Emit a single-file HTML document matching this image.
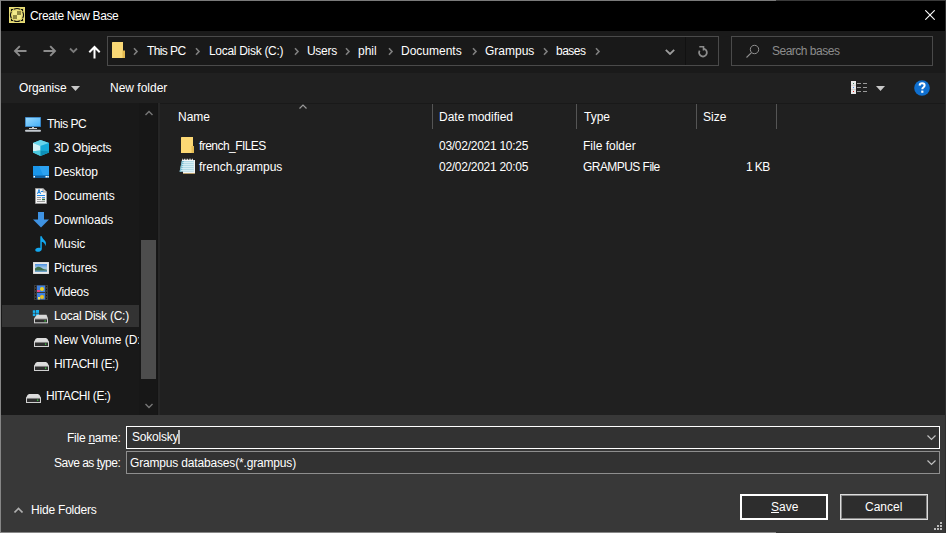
<!DOCTYPE html>
<html><head><meta charset="utf-8">
<style>
*{margin:0;padding:0;box-sizing:border-box}
html,body{width:946px;height:533px;overflow:hidden;background:#191919}
body{position:relative;font-family:"Liberation Sans",sans-serif;font-size:12px;color:#fff}
.a{position:absolute}
.t{position:absolute;white-space:nowrap;line-height:14px}
#title{left:0;top:0;width:946px;height:31px;background:#000}
#nav{left:0;top:31px;width:946px;height:42px;background:#1a1a1a}
#cmd{left:0;top:73px;width:946px;height:30px;background:#202020}
#side{left:0;top:103px;width:159px;height:312px;background:#191919}
#content{left:159px;top:104px;width:787px;height:311px;background:#202020}
#bottom{left:0;top:415px;width:946px;height:118px;background:#383838}
.box{position:absolute;border:1px solid #555}
.chev{color:#9a9a9a}
.side .t{}
</style></head><body>
<div class="a" id="title"></div>
<div class="a" id="nav"></div>
<div class="a" id="cmd"></div>
<div class="a" id="side"></div>
<div class="a" id="content"></div>
<div class="a" id="bottom"></div>

<!-- borders -->
<div class="a" style="left:0;top:0;width:776px;height:1px;background:#7a7a7a"></div>
<div class="a" style="left:776px;top:0;width:170px;height:1px;background:#3a3a3a"></div>
<div class="a" style="left:0;top:0;width:1px;height:533px;background:#868686"></div>
<div class="a" style="left:0;top:532px;width:776px;height:1px;background:#888"></div>
<div class="a" style="left:776px;top:532px;width:170px;height:1px;background:#353535"></div>
<div class="a" style="left:945px;top:1px;width:1px;height:531px;background:#2e2e2e"></div>

<!-- title -->
<svg class="a" style="left:9px;top:7px" width="16" height="16" viewBox="0 0 16 16">
<rect x="0" y="0" width="16" height="16" fill="#e6dc78"/>
<rect x="1" y="1" width="14" height="14" fill="#d6cc68"/>
<circle cx="8" cy="8" r="5.6" fill="#e8de7a"/>
<rect x="4" y="4" width="4" height="4" fill="#f2ea8a"/><rect x="8" y="8" width="4" height="4" fill="#f2ea8a"/>
<rect x="8" y="4" width="4" height="4" fill="#8f8842"/><rect x="4" y="8" width="4" height="4" fill="#8f8842"/>
<path d="M5 2.3A6 6 0 0 1 11 2.3M13.7 5A6 6 0 0 1 13.7 11M11 13.7A6 6 0 0 1 5 13.7M2.3 11A6 6 0 0 1 2.3 5" stroke="#111" stroke-width="1.1" fill="none"/>
<path d="M2 2h2.2v1H3v1.2H2zM14 2h-2.2v1H13v1.2h1zM2 14h2.2v-1H3v-1.2H2zM14 14h-2.2v-1H13v-1.2h1z" fill="#111"/>
</svg>
<div class="t" style="left:30px;top:9px;font-size:12px;letter-spacing:-0.38px">Create New Base</div>
<svg class="a" style="left:925px;top:10px" width="10" height="10" viewBox="0 0 10 10"><path d="M0.3 0.3L9.7 9.7M9.7 0.3L0.3 9.7" stroke="#fff" stroke-width="1.1"/></svg>

<!-- nav -->
<svg class="a" style="left:13px;top:45px" width="14" height="12" viewBox="0 0 14 12"><path d="M13.5 6H2M6.8 1.2L2 6L6.8 10.8" stroke="#8c8c8c" stroke-width="1.9" fill="none"/></svg>
<svg class="a" style="left:43px;top:45px" width="14" height="12" viewBox="0 0 14 12"><path d="M0.5 6H12M7.2 1.2L12 6L7.2 10.8" stroke="#8c8c8c" stroke-width="1.9" fill="none"/></svg>
<svg class="a" style="left:69px;top:47px" width="9" height="7" viewBox="0 0 9 7"><path d="M1 1.5L4.5 5L8 1.5" stroke="#7a7a7a" stroke-width="1.8" fill="none"/></svg>
<svg class="a" style="left:88px;top:45px" width="13" height="14" viewBox="0 0 13 14"><path d="M6.5 13.5V2.5M1.3 7.2L6.5 2L11.7 7.2" stroke="#fff" stroke-width="2" fill="none"/></svg>

<div class="box" style="left:107px;top:36px;width:612px;height:30px;border-color:#4a4a4a;background:#191919"></div>
<div class="a" style="left:685px;top:37px;width:1px;height:28px;background:#111"></div>
<svg class="a" style="left:112px;top:42px" width="14" height="16" viewBox="0 0 14 16"><path d="M0 0.5Q0 0 0.5 0H11V16H0z" fill="#f8d775"/><path d="M10.5 8.5h2.5v7.5h-2.5z" fill="#e3b94f"/></svg>
<svg class="a" style="left:133px;top:47px" width="6" height="9" viewBox="0 0 6 9"><path d="M1 1.3L4 4.5L1 7.7" stroke="#808080" stroke-width="1.6" fill="none"/></svg>
<div class="t" style="left:147px;top:44px;letter-spacing:-0.6px">This PC</div>
<svg class="a" style="left:195px;top:47px" width="6" height="9" viewBox="0 0 6 9"><path d="M1 1.3L4 4.5L1 7.7" stroke="#808080" stroke-width="1.6" fill="none"/></svg>
<div class="t" style="left:209px;top:44px;letter-spacing:-0.3px">Local Disk (C:)</div>
<svg class="a" style="left:294px;top:47px" width="6" height="9" viewBox="0 0 6 9"><path d="M1 1.3L4 4.5L1 7.7" stroke="#808080" stroke-width="1.6" fill="none"/></svg>
<div class="t" style="left:307px;top:44px;letter-spacing:-0.3px">Users</div>
<svg class="a" style="left:345px;top:47px" width="6" height="9" viewBox="0 0 6 9"><path d="M1 1.3L4 4.5L1 7.7" stroke="#808080" stroke-width="1.6" fill="none"/></svg>
<div class="t" style="left:358px;top:44px">phil</div>
<svg class="a" style="left:388px;top:47px" width="6" height="9" viewBox="0 0 6 9"><path d="M1 1.3L4 4.5L1 7.7" stroke="#808080" stroke-width="1.6" fill="none"/></svg>
<div class="t" style="left:401px;top:44px">Documents</div>
<svg class="a" style="left:472px;top:47px" width="6" height="9" viewBox="0 0 6 9"><path d="M1 1.3L4 4.5L1 7.7" stroke="#808080" stroke-width="1.6" fill="none"/></svg>
<div class="t" style="left:485px;top:44px">Grampus</div>
<svg class="a" style="left:543px;top:47px" width="6" height="9" viewBox="0 0 6 9"><path d="M1 1.3L4 4.5L1 7.7" stroke="#808080" stroke-width="1.6" fill="none"/></svg>
<div class="t" style="left:556px;top:44px;letter-spacing:-0.5px">bases</div>
<svg class="a" style="left:595px;top:47px" width="6" height="9" viewBox="0 0 6 9"><path d="M1 1.3L4 4.5L1 7.7" stroke="#808080" stroke-width="1.6" fill="none"/></svg>
<svg class="a" style="left:665px;top:49px" width="10" height="6" viewBox="0 0 10 6"><path d="M0.8 0.8L5 5L9.2 0.8" stroke="#9c9c9c" stroke-width="1.8" fill="none"/></svg>
<svg class="a" style="left:696px;top:44px" width="14" height="14" viewBox="0 0 14 14"><path d="M7.4 4.7A3.9 3.9 0 1 1 3.6 6.6" stroke="#8c8c8c" stroke-width="1.8" fill="none"/><path d="M3.3 2.7H7.5V6.4" stroke="#8c8c8c" stroke-width="1.6" fill="none"/></svg>

<div class="box" style="left:731px;top:36px;width:202px;height:30px;border-color:#4a4a4a;background:#191919"></div>
<svg class="a" style="left:745px;top:44px" width="15" height="15" viewBox="0 0 15 15"><circle cx="9.5" cy="5.5" r="4.2" stroke="#909090" stroke-width="1" fill="none"/><path d="M6.5 8.6L1.5 13.5" stroke="#909090" stroke-width="1.1"/></svg>
<div class="t" style="left:772px;top:44px;color:#8c8c8c;letter-spacing:-0.5px">Search bases</div>

<!-- command bar -->
<div class="t" style="left:19px;top:81px;letter-spacing:-0.15px">Organise</div>
<svg class="a" style="left:71px;top:86px" width="9" height="5" viewBox="0 0 9 5"><path d="M0 0h9L4.5 5z" fill="#c8c8c8"/></svg>
<div class="t" style="left:110px;top:81px">New folder</div>
<svg class="a" style="left:851px;top:81px" width="17" height="13" viewBox="0 0 17 13"><rect x="0" y="0" width="5" height="13" fill="#e8e8e8"/><path d="M0 4.3h5M0 8.6h5" stroke="#bbb" stroke-width="0.6"/><rect x="2" y="2" width="1" height="1" fill="#3a7a5a"/><rect x="2" y="6" width="1" height="1" fill="#4a90f0"/><rect x="2" y="10" width="1" height="1" fill="#e02020"/><path d="M6 2.5h4M12 2.5h4M6 6.5h4M12 6.5h4M6 10.5h4M12 10.5h4" stroke="#9a9a9a" stroke-width="1.2"/></svg>
<svg class="a" style="left:876px;top:86px" width="9" height="5" viewBox="0 0 9 5"><path d="M0 0h9L4.5 5z" fill="#c8c8c8"/></svg>
<svg class="a" style="left:914px;top:80px" width="16" height="16" viewBox="0 0 16 16"><circle cx="8" cy="8" r="7.8" fill="#0f6fcf"/><path d="M5.6 5.6Q5.8 3.3 8.1 3.3Q10.6 3.3 10.6 5.5Q10.6 6.7 9.3 7.5Q8.3 8.1 8.3 9.3" stroke="#fff" stroke-width="2" fill="none"/><rect x="7.2" y="10.6" width="2.2" height="2.2" fill="#fff"/></svg>

<!-- sidebar -->
<div class="a" style="left:139px;top:103px;width:19px;height:312px;background:#171717"></div>
<div class="a" style="left:157px;top:103px;width:1px;height:312px;background:#151515"></div><div class="a" style="left:158px;top:103px;width:2px;height:312px;background:#262626"></div>
<svg class="a" style="left:145px;top:110px" width="8" height="6" viewBox="0 0 8 6"><path d="M0.5 5L4 1.5L7.5 5" stroke="#777" stroke-width="1.4" fill="none"/></svg>
<div class="a" style="left:141px;top:240px;width:15px;height:139px;background:#4d4d4d"></div>
<svg class="a" style="left:145px;top:403px" width="8" height="6" viewBox="0 0 8 6"><path d="M0.5 1L4 4.5L7.5 1" stroke="#777" stroke-width="1.4" fill="none"/></svg>
<div class="a" style="left:2px;top:305px;width:137px;height:22px;background:#333"></div>


<!-- sidebar icons -->
<svg class="a" style="left:25px;top:116px" width="16" height="16" viewBox="0 0 16 16">
<defs><linearGradient id="scr" x1="0" y1="0" x2="1" y2="1"><stop offset="0" stop-color="#9adaff"/><stop offset="1" stop-color="#45b0f8"/></linearGradient></defs>
<rect x="0" y="1" width="16" height="10" fill="#2a70b0"/><rect x="0.7" y="1.7" width="14.6" height="8.6" fill="url(#scr)"/>
<rect x="7" y="11" width="2" height="2" fill="#c8c8c8"/><rect x="4" y="12" width="8" height="1" fill="#d0d0d0"/>
<rect x="0" y="13.8" width="16" height="2" rx="1" fill="#c4cad0"/></svg>

<svg class="a" style="left:33px;top:140px" width="16" height="16" viewBox="0 0 16 16">
<path d="M7.5 0L16 3V12.5L7.5 16L0 12.5V3Z" fill="#3cc4dc"/>
<path d="M7.5 0L16 3L7.5 6.1L0 3Z" fill="#66d4ea"/>
<path d="M0 3L7.5 6.1V10.6L0 11.2Z" fill="#d4f2f6"/>
<path d="M0 11.2L7.5 10.6V16L0 12.5Z" fill="#4cc8de"/>
<path d="M7.5 6.1L16 3V11.2L7.5 10.6Z" fill="#14aad8"/>
<path d="M7.5 10.6L16 11.2V12.5L7.5 16Z" fill="#0d8fb8"/></svg>

<svg class="a" style="left:33px;top:166px" width="16" height="12" viewBox="0 0 16 12">
<rect x="0" y="0" width="16" height="12" fill="#1a96ea"/><path d="M6 0H16V9L10 9Z" fill="#3aaaf5" opacity="0.6"/>
<rect x="0" y="9.5" width="16" height="2.5" fill="#0f5fa0"/><rect x="0.5" y="10" width="1.5" height="1.5" fill="#fff"/><rect x="12.5" y="10" width="1.5" height="1.5" fill="#fff"/><rect x="14.3" y="10" width="1.5" height="1.5" fill="#fff"/></svg>

<svg class="a" style="left:35px;top:188px" width="12" height="16" viewBox="0 0 12 16">
<path d="M0.5 0.5H8L11.5 4V15.5H0.5Z" fill="#f4f4f4" stroke="#9a9a9a"/><path d="M8 0.5V4H11.5" fill="#ddd" stroke="#9a9a9a"/>
<path d="M2.5 6L4 1.5L5.5 6M3 4.5H5" stroke="#1e88e5" stroke-width="1" fill="none"/><rect x="6" y="3" width="2" height="1" fill="#1e88e5"/>
<rect x="2" y="7" width="8" height="1" fill="#1e88e5"/><rect x="2" y="9" width="4" height="1" fill="#999"/><rect x="7" y="9" width="3" height="1.2" fill="#4a8fe0"/>
<rect x="2" y="11" width="4" height="1" fill="#999"/><rect x="7" y="10.8" width="3" height="1.4" fill="#2f6f3f"/><rect x="2" y="13" width="8" height="1" fill="#999"/></svg>

<svg class="a" style="left:33px;top:212px" width="16" height="16" viewBox="0 0 16 16">
<path d="M5 0H11V7.5H16L8 15.6L0 7.5H5Z" fill="#3f93e3"/></svg>

<svg class="a" style="left:35px;top:236px" width="12" height="16" viewBox="0 0 12 16">
<path d="M5.3 0.3H6.8C7.3 2.5 9 3.5 10.3 5.3C11.5 7 10.8 9.3 10 10.2C10.5 8.3 9.3 6.5 6.8 5.8V13C6.8 15 4.5 16 2.3 15.8C0.5 15.6 -0.3 14 0.8 12.8C2 11.5 4 11.4 5.3 12.1Z" fill="#12a8f0"/></svg>

<svg class="a" style="left:33px;top:262px" width="16" height="12" viewBox="0 0 16 12">
<rect x="0" y="0" width="16" height="12" fill="#e8e8e8" stroke="#bbb" stroke-width="0.6"/>
<defs><linearGradient id="sky" x1="0" y1="0" x2="0" y2="1"><stop offset="0" stop-color="#4b8fe0"/><stop offset="0.5" stop-color="#a8cbe8"/><stop offset="1" stop-color="#7aa0b8"/></linearGradient></defs>
<rect x="2" y="2" width="12" height="8" fill="url(#sky)"/><path d="M2 6.5C4 4.5 6 4 8 5.5C10 7 12 7.5 14 8V10H2Z" fill="#3f6f4a"/><path d="M2 8.5H14V10H2Z" fill="#6aa0c8"/></svg>

<svg class="a" style="left:34px;top:285px" width="14" height="15" viewBox="0 0 14 15">
<rect x="0" y="0" width="14" height="15" fill="#3a3a3a"/>
<path d="M1 1.5h1M1 4.5h1M1 7.5h1M1 10.5h1M1 13.5h1M12 1.5h1M12 4.5h1M12 7.5h1M12 10.5h1M12 13.5h1" stroke="#111" stroke-width="1.2"/>
<rect x="3" y="0.5" width="8" height="6.5" fill="#3d7fe0"/><rect x="3" y="8" width="8" height="6.5" fill="#3d7fe0"/>
<circle cx="8" cy="4" r="2" fill="#f0d020"/><rect x="3" y="5" width="3" height="2" fill="#e84a8a"/><circle cx="8" cy="12" r="2" fill="#e8c020"/><rect x="4" y="12" width="2" height="2.5" fill="#f0e060"/></svg>

<svg class="a" style="left:32px;top:310px" width="17" height="14" viewBox="0 0 17 14">
<rect x="0.8" y="0.3" width="2.6" height="2.6" fill="#1ab4f4"/><rect x="4" y="0" width="3" height="2.9" fill="#1ab4f4"/><rect x="0.8" y="3.5" width="2.6" height="2.6" fill="#1ab4f4"/><rect x="4" y="3.5" width="3" height="3" fill="#1ab4f4"/>
<path d="M3.5 6.5L5 4.8H14.5L16 8.5H2Z" fill="#d8d8d8"/><rect x="2" y="8.3" width="14" height="5" fill="#d0d0d0"/><rect x="3" y="9.3" width="12" height="3" fill="#2e2e2e"/><rect x="12.5" y="10.3" width="1.3" height="1.3" fill="#3cd040"/></svg>

<svg class="a" style="left:34px;top:338px" width="15" height="10" viewBox="0 0 15 10">
<path d="M1.5 1L3 0H12L13.5 1L15 4H0Z" fill="#dcdcdc"/><rect x="0" y="3.5" width="15" height="5.5" fill="#d0d0d0"/><rect x="1" y="4.5" width="13" height="3.5" fill="#2e2e2e"/><rect x="11" y="5.5" width="1.3" height="1.3" fill="#3cd040"/></svg>
<svg class="a" style="left:34px;top:362px" width="15" height="10" viewBox="0 0 15 10">
<path d="M1.5 1L3 0H12L13.5 1L15 4H0Z" fill="#dcdcdc"/><rect x="0" y="3.5" width="15" height="5.5" fill="#d0d0d0"/><rect x="1" y="4.5" width="13" height="3.5" fill="#2e2e2e"/><rect x="11" y="5.5" width="1.3" height="1.3" fill="#3cd040"/></svg>
<svg class="a" style="left:26px;top:394px" width="15" height="10" viewBox="0 0 15 10">
<path d="M1.5 1L3 0H12L13.5 1L15 4H0Z" fill="#dcdcdc"/><rect x="0" y="3.5" width="15" height="5.5" fill="#d0d0d0"/><rect x="1" y="4.5" width="13" height="3.5" fill="#2e2e2e"/><rect x="11" y="5.5" width="1.3" height="1.3" fill="#3cd040"/></svg>
<div class="t" style="left:47px;top:117px;letter-spacing:-0.5px">This PC</div>
<div class="t" style="left:54px;top:141px;letter-spacing:-0.2px">3D Objects</div>
<div class="t" style="left:54px;top:165px">Desktop</div>
<div class="t" style="left:54px;top:189px">Documents</div>
<div class="t" style="left:54px;top:213px">Downloads</div>
<div class="t" style="left:54px;top:237px">Music</div>
<div class="t" style="left:54px;top:261px">Pictures</div>
<div class="t" style="left:54px;top:285px;letter-spacing:-0.3px">Videos</div>
<div class="t" style="left:54px;top:309px;letter-spacing:-0.25px">Local Disk (C:)</div>
<div class="a" style="left:54px;top:330px;width:85px;height:20px;overflow:hidden"><div class="t" style="left:0;top:3px">New Volume (D:)</div></div>
<div class="t" style="left:54px;top:357px;letter-spacing:-0.45px">HITACHI (E:)</div>
<div class="t" style="left:46px;top:389px;letter-spacing:-0.45px">HITACHI (E:)</div>

<!-- content -->
<div class="a" style="left:432px;top:104px;width:1px;height:25px;background:#555"></div>
<div class="a" style="left:576px;top:104px;width:1px;height:25px;background:#555"></div>
<div class="a" style="left:696px;top:104px;width:1px;height:25px;background:#555"></div>
<div class="a" style="left:776px;top:104px;width:1px;height:25px;background:#555"></div>
<svg class="a" style="left:299px;top:104px" width="8" height="5" viewBox="0 0 8 5"><path d="M0.5 4.5L4 1L7.5 4.5" stroke="#999" stroke-width="1.2" fill="none"/></svg>
<div class="t" style="left:178px;top:110px">Name</div>
<div class="t" style="left:439px;top:110px">Date modified</div>
<div class="t" style="left:584px;top:110px">Type</div>
<div class="t" style="left:703px;top:110px">Size</div>

<svg class="a" style="left:181px;top:137px" width="14" height="16" viewBox="0 0 14 16"><path d="M0 0.5Q0 0 0.5 0H12V16H0z" fill="#fcd874"/><path d="M10.5 9h2.5v7h-2.5z" fill="#e6bd55"/></svg>
<div class="t" style="left:199px;top:139px;letter-spacing:-0.55px">french_FILES</div>
<div class="t" style="left:439px;top:139px;letter-spacing:-0.27px">03/02/2021 10:25</div>
<div class="t" style="left:583px;top:139px">File folder</div>

<svg class="a" style="left:179px;top:158px" width="17" height="16" viewBox="0 0 17 16"><rect x="4" y="2" width="12" height="13.5" fill="#f2f2f2"/><rect x="4" y="15" width="12" height="1" fill="#b39a68"/><path d="M3 2H14.8V13.8H0.6z" fill="#b2dae6"/><path d="M3 2H5.2L2.8 13.8H0.6z" fill="#78bccf"/><path d="M3.5 4.5H14.8M3 6.5H14.8M2.6 8.5H14.8M2.2 10.5H14.8M1.8 12.5H14.8" stroke="#dff2f7" stroke-width="0.8"/><path d="M3 2.5L3.8 0.3L4.6 2.5L5.3999999999999995 0.3L6.199999999999999 2.5L7.0 0.3L7.800000000000001 2.5L8.6 0.3L9.4 2.5L10.200000000000001 0.3L11.0 2.5L11.8 0.3L12.6 2.5L13.4 0.3L14.2 2.5V3H3z" fill="#fafafa"/></svg>
<div class="t" style="left:199px;top:160px">french.grampus</div>
<div class="t" style="left:439px;top:160px;letter-spacing:-0.27px">02/02/2021 20:05</div>
<div class="t" style="left:583px;top:160px;letter-spacing:-0.55px">GRAMPUS File</div>
<div class="t" style="left:746px;top:160px;letter-spacing:-0.6px">1 KB</div>

<!-- bottom -->
<div class="t" style="left:67px;top:431px;letter-spacing:-0.25px">File <u>n</u>ame:</div>
<div class="a" style="left:126px;top:426px;width:814px;height:23px;border:1px solid #fff;background:#323232"></div>
<div class="t" style="left:132px;top:430px;letter-spacing:-0.2px">Sokolsky</div>
<div class="a" style="left:178px;top:430px;width:2px;height:14px;background:#bdbdbd"></div>
<svg class="a" style="left:927px;top:435px" width="9" height="6" viewBox="0 0 9 6"><path d="M0.5 0.5L4.5 4.5L8.5 0.5" stroke="#c0c0c0" stroke-width="1.2" fill="none"/></svg>

<div class="t" style="left:54px;top:456px;letter-spacing:-0.5px">Save as <u>t</u>ype:</div>
<div class="a" style="left:126px;top:451px;width:814px;height:23px;border:1px solid #8e8e8e;background:#323232"></div>
<div class="t" style="left:130px;top:456px;letter-spacing:-0.17px">Grampus databases(*.grampus)</div>
<svg class="a" style="left:927px;top:460px" width="9" height="6" viewBox="0 0 9 6"><path d="M0.5 0.5L4.5 4.5L8.5 0.5" stroke="#c0c0c0" stroke-width="1.2" fill="none"/></svg>

<svg class="a" style="left:14px;top:507px" width="9" height="6" viewBox="0 0 9 6"><path d="M0.5 5.5L4.5 1.5L8.5 5.5" stroke="#b0b0b0" stroke-width="1.6" fill="none"/></svg>
<div class="t" style="left:31px;top:503px;letter-spacing:-0.2px">Hide Folders</div>

<div class="a" style="left:740px;top:494px;width:88px;height:26px;border:2px solid #fff;background:#2d2d2d"></div>
<div class="t" style="left:771px;top:500px"><u>S</u>ave</div>
<div class="a" style="left:840px;top:494px;width:88px;height:26px;border:1px solid #ddd;background:#2d2d2d;box-shadow:inset 0 0 0 1px #888"></div>
<div class="t" style="left:865px;top:500px">Cancel</div>

<svg class="a" style="left:934px;top:522px" width="9" height="9" viewBox="0 0 9 9"><path d="M6 0h2v2H6zM3 3h2v2H3zM6 3h2v2H6zM0 6h2v2H0zM3 6h2v2H3zM6 6h2v2H6z" fill="#bbb"/></svg>
</body></html>
